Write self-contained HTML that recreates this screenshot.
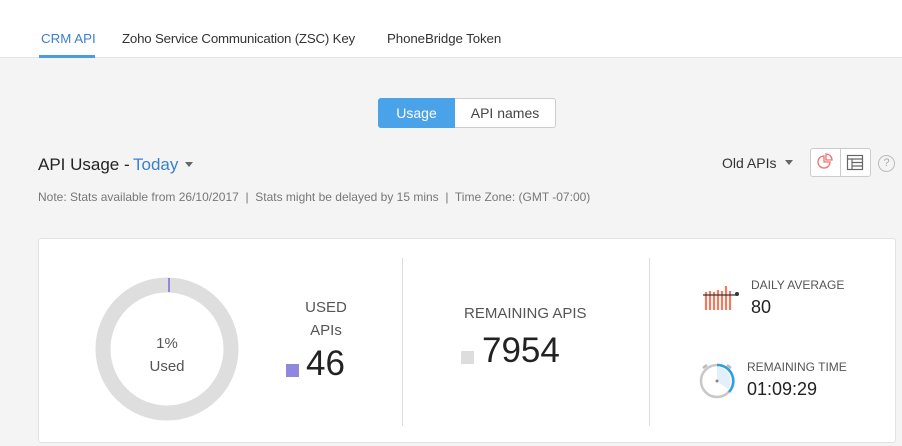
<!DOCTYPE html>
<html><head><style>
*{margin:0;padding:0;box-sizing:border-box}
body{width:902px;height:446px;background:#f4f4f4;font-family:"Liberation Sans",sans-serif;position:relative;overflow:hidden;color:#333}
.a{position:absolute;white-space:nowrap}
</style></head><body>
<div class="a" style="left:0;top:0;width:902px;height:58px;background:#fff;border-bottom:1px solid #e4e4e4"></div>
<div class="a" style="left:41px;top:31px;font-size:13.3px;color:#3a7fd0">CRM API</div>
<div class="a" style="left:39px;top:55px;width:56px;height:3px;background:#4a9de0"></div>
<div class="a" style="left:122px;top:31px;font-size:13.3px;letter-spacing:-0.2px;color:#333">Zoho Service Communication (ZSC) Key</div>
<div class="a" style="left:387px;top:31px;font-size:13.3px;letter-spacing:-0.1px;color:#333">PhoneBridge Token</div>

<div class="a" style="left:378px;top:98px;width:77px;height:30px;background:#4aa3e8;border-radius:3px 0 0 3px;color:#fff;font-size:14px;text-align:center;line-height:30px">Usage</div>
<div class="a" style="left:455px;top:98px;width:101px;height:30px;background:#fff;border:1px solid #ccc;border-left:none;border-radius:0 3px 3px 0;color:#444;font-size:14px;text-align:center;line-height:28px">API names</div>

<div class="a" style="left:38px;top:155px;font-size:17px;color:#222">API Usage -</div>
<div class="a" style="left:133px;top:155px;font-size:17px;color:#3a7fd0">Today</div>
<div class="a" style="left:185px;top:162px;width:0;height:0;border-left:4px solid transparent;border-right:4px solid transparent;border-top:5px solid #666"></div>
<div class="a" style="left:38px;top:190px;font-size:12px;color:#777">Note: Stats available from 26/10/2017 &nbsp;|&nbsp; Stats might be delayed by 15 mins &nbsp;|&nbsp; Time Zone: (GMT -07:00)</div>

<div class="a" style="left:722px;top:155px;font-size:14px;color:#333">Old APIs</div>
<div class="a" style="left:785px;top:160px;width:0;height:0;border-left:4px solid transparent;border-right:4px solid transparent;border-top:5px solid #666"></div>
<div class="a" style="left:810px;top:148px;width:61px;height:29px;background:#fff;border:1px solid #ccc;border-radius:3px"></div>
<div class="a" style="left:840px;top:149px;width:1px;height:27px;background:#ccc"></div>
<svg class="a" style="left:815px;top:152px" width="20" height="20" viewBox="0 0 20 20" fill="none" stroke="#f07070" stroke-width="1.3"><path d="M9 4a6 6 0 1 0 6 6H9z"/><path d="M11 2v6h6a6 6 0 0 0-6-6z"/></svg>
<svg class="a" style="left:846px;top:154px" width="18" height="17" viewBox="0 0 18 17" fill="none" stroke="#666" stroke-width="1.2"><rect x="1.5" y="1.5" width="15" height="14"/><path d="M1.5 5h15M6 5v10.5M6 8.5h10.5M6 12h10.5"/></svg>
<div class="a" style="left:878px;top:155px;width:17px;height:17px;border:1px solid #bbb;border-radius:50%;font-size:11px;color:#aaa;text-align:center;line-height:15px">?</div>

<div class="a" style="left:38px;top:238px;width:858px;height:205px;background:#fff;border:1px solid #e2e2e2;border-radius:3px"></div>
<svg class="a" style="left:94px;top:276px" width="146" height="146"><circle cx="73" cy="73" r="64" fill="none" stroke="#dedede" stroke-width="15"/><rect x="74" y="2" width="2" height="14" fill="#8f88dd"/></svg>
<div class="a" style="left:94px;top:332px;width:146px;text-align:center;font-size:15px;color:#555;line-height:23px;white-space:normal">1%<br>Used</div>
<div class="a" style="left:296px;top:296px;width:60px;text-align:center;font-size:15px;color:#555;line-height:23px;white-space:normal">USED<br>APIs</div>
<div class="a" style="left:286px;top:364px;width:13px;height:13px;background:#9088dc"></div>
<div class="a" style="left:306px;top:344px;font-size:35px;color:#222">46</div>
<div class="a" style="left:402px;top:258px;width:1px;height:168px;background:#ddd"></div>
<div class="a" style="left:464px;top:305px;font-size:15px;color:#555">REMAINING APIS</div>
<div class="a" style="left:461px;top:351px;width:13px;height:13px;background:#ddd"></div>
<div class="a" style="left:482px;top:331px;font-size:35px;color:#222">7954</div>
<div class="a" style="left:649px;top:258px;width:1px;height:168px;background:#ddd"></div>

<svg class="a" style="left:702px;top:283px" width="38" height="30"><g stroke="#f07a60" stroke-width="2.2"><path d="M4 9v18M8 8v19M12 9v18M16 7v20M20 8v19M24 3v24M28 8v19"/></g><path d="M1 12h34" stroke="#333" stroke-width="1.2"/><circle cx="35" cy="11" r="2" fill="#333"/></svg>
<div class="a" style="left:751px;top:278px;font-size:12px;color:#555">DAILY AVERAGE</div>
<div class="a" style="left:751px;top:297px;font-size:18px;color:#222">80</div>
<svg class="a" style="left:698px;top:361px" width="40" height="38"><circle cx="19" cy="20" r="16" fill="#fff" stroke="#c8c8c8" stroke-width="2.5"/><path d="M19 20V6a14 14 0 0 1 11 22z" fill="#e2f0fb"/><path d="M19 4a16 16 0 0 1 12 27" fill="none" stroke="#2aa2e0" stroke-width="2.5"/><path d="M5 7l4-3M33 7l-4-3" stroke="#bbb" stroke-width="2.5"/><circle cx="19" cy="20" r="1.5" fill="#888"/></svg>
<div class="a" style="left:747px;top:360px;font-size:12px;color:#555">REMAINING TIME</div>
<div class="a" style="left:747px;top:379px;font-size:18px;color:#222">01:09:29</div>
</body></html>
